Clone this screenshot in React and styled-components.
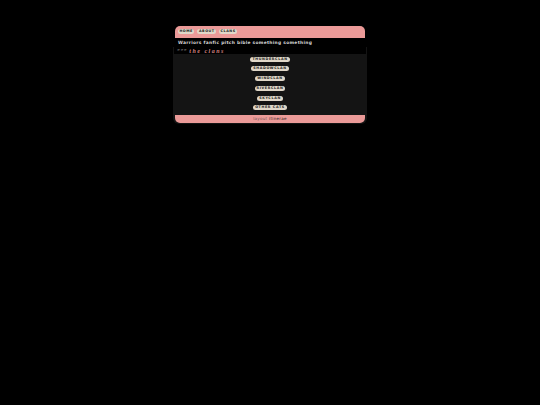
import styled, { createGlobalStyle } from 'styled-components'

const Global = createGlobalStyle`
html, body {
  margin: 0;
  padding: 0;
  background: #000;
  font-family: "DejaVu Sans", sans-serif;
}
`

const Page = styled.div`
  width: 540px;
  height: 405px;
  padding-top: 26px;
  box-sizing: border-box;
  overflow: hidden;
`

const Layout = styled.div`
  width: 190px;
  margin-left: 175px;
  display: flex;
  flex-direction: column;
  opacity: 0.99;
`

const Header = styled.div`
  height: 12px;
  background: #ee9c9a;
  border-radius: 5px 5px 0 0;
  display: flex;
  align-items: flex-start;
  gap: 3px;
  padding: 2.5px 0 0 3px;
  box-sizing: border-box;
`

const NavLink = styled.a`
  height: 5px;
  padding: 0 1.5px;
  background: #e3dacb;
  border-radius: 3px;
  color: #222;
  font-size: 3.4px;
  font-weight: bold;
  letter-spacing: 0.5px;
  line-height: 5px;
`

const Title = styled.div`
  height: 9px;
  background: #000;
  color: #d8d8d8;
  font-size: 4.4px;
  font-weight: bold;
  letter-spacing: 0.3px;
  line-height: 9px;
  padding-left: 3px;
`

const Main = styled.div`
  margin: 0 -2px;
  padding-bottom: 1px;
  background: #151515;
  border-radius: 0 0 6px 6px;
  display: flex;
  flex-direction: column;
`

const SectionHead = styled.div`
  height: 7px;
  margin: 0 1px;
  background: #000;
  display: flex;
  align-items: center;
  gap: 2px;
  padding-left: 3px;
`

const Arrows = styled.span`
  color: #ccc;
  font-size: 3.6px;
  line-height: 6px;
  letter-spacing: 0.4px;
  align-self: flex-start;
`

const SectionTitle = styled.span`
  color: #d98785;
  font-family: "Liberation Serif", serif;
  font-size: 6px;
  font-style: italic;
  font-weight: bold;
  letter-spacing: 1.5px;
  line-height: 8px;
`

const ClanList = styled.div`
  display: flex;
  flex-direction: column;
  align-items: center;
  gap: 4.8px;
  padding: 2.5px 0 4.5px;
`

const ClanLink = styled.a`
  height: 5px;
  padding: 0 2px;
  background: #e3dacb;
  border-radius: 3px;
  color: #222;
  font-size: 3.4px;
  font-weight: bold;
  letter-spacing: 0.6px;
  line-height: 5px;
`

const Footer = styled.div`
  height: 8px;
  margin: 0 2px;
  background: #ee9c9a;
  border-radius: 0 0 5px 5px;
  color: #7a5a5a;
  font-size: 4px;
  letter-spacing: 0.3px;
  line-height: 8px;
  text-align: center;
`

const FooterLink = styled.b`
  color: #2a2222;
  font-weight: normal;
`

const nav = ['HOME', 'ABOUT', 'CLANS']
const clans = ['THUNDERCLAN', 'SHADOWCLAN', 'WINDCLAN', 'RIVERCLAN', 'SKYCLAN', 'OTHER CATS']

export default function App() {
  return (
    <Page>
      <Global />
      <Layout>
        <Header>
          {nav.map(n => <NavLink key={n}>{n}</NavLink>)}
        </Header>
        <Title>Warriors fanfic pitch bible something something</Title>
        <Main>
          <SectionHead>
            <Arrows>&gt;&gt;&gt;</Arrows>
            <SectionTitle>the clans</SectionTitle>
          </SectionHead>
          <ClanList>
            {clans.map(c => <ClanLink key={c}>{c}</ClanLink>)}
          </ClanList>
          <Footer>layout <FooterLink>itinerae</FooterLink></Footer>
        </Main>
      </Layout>
    </Page>
  )
}
